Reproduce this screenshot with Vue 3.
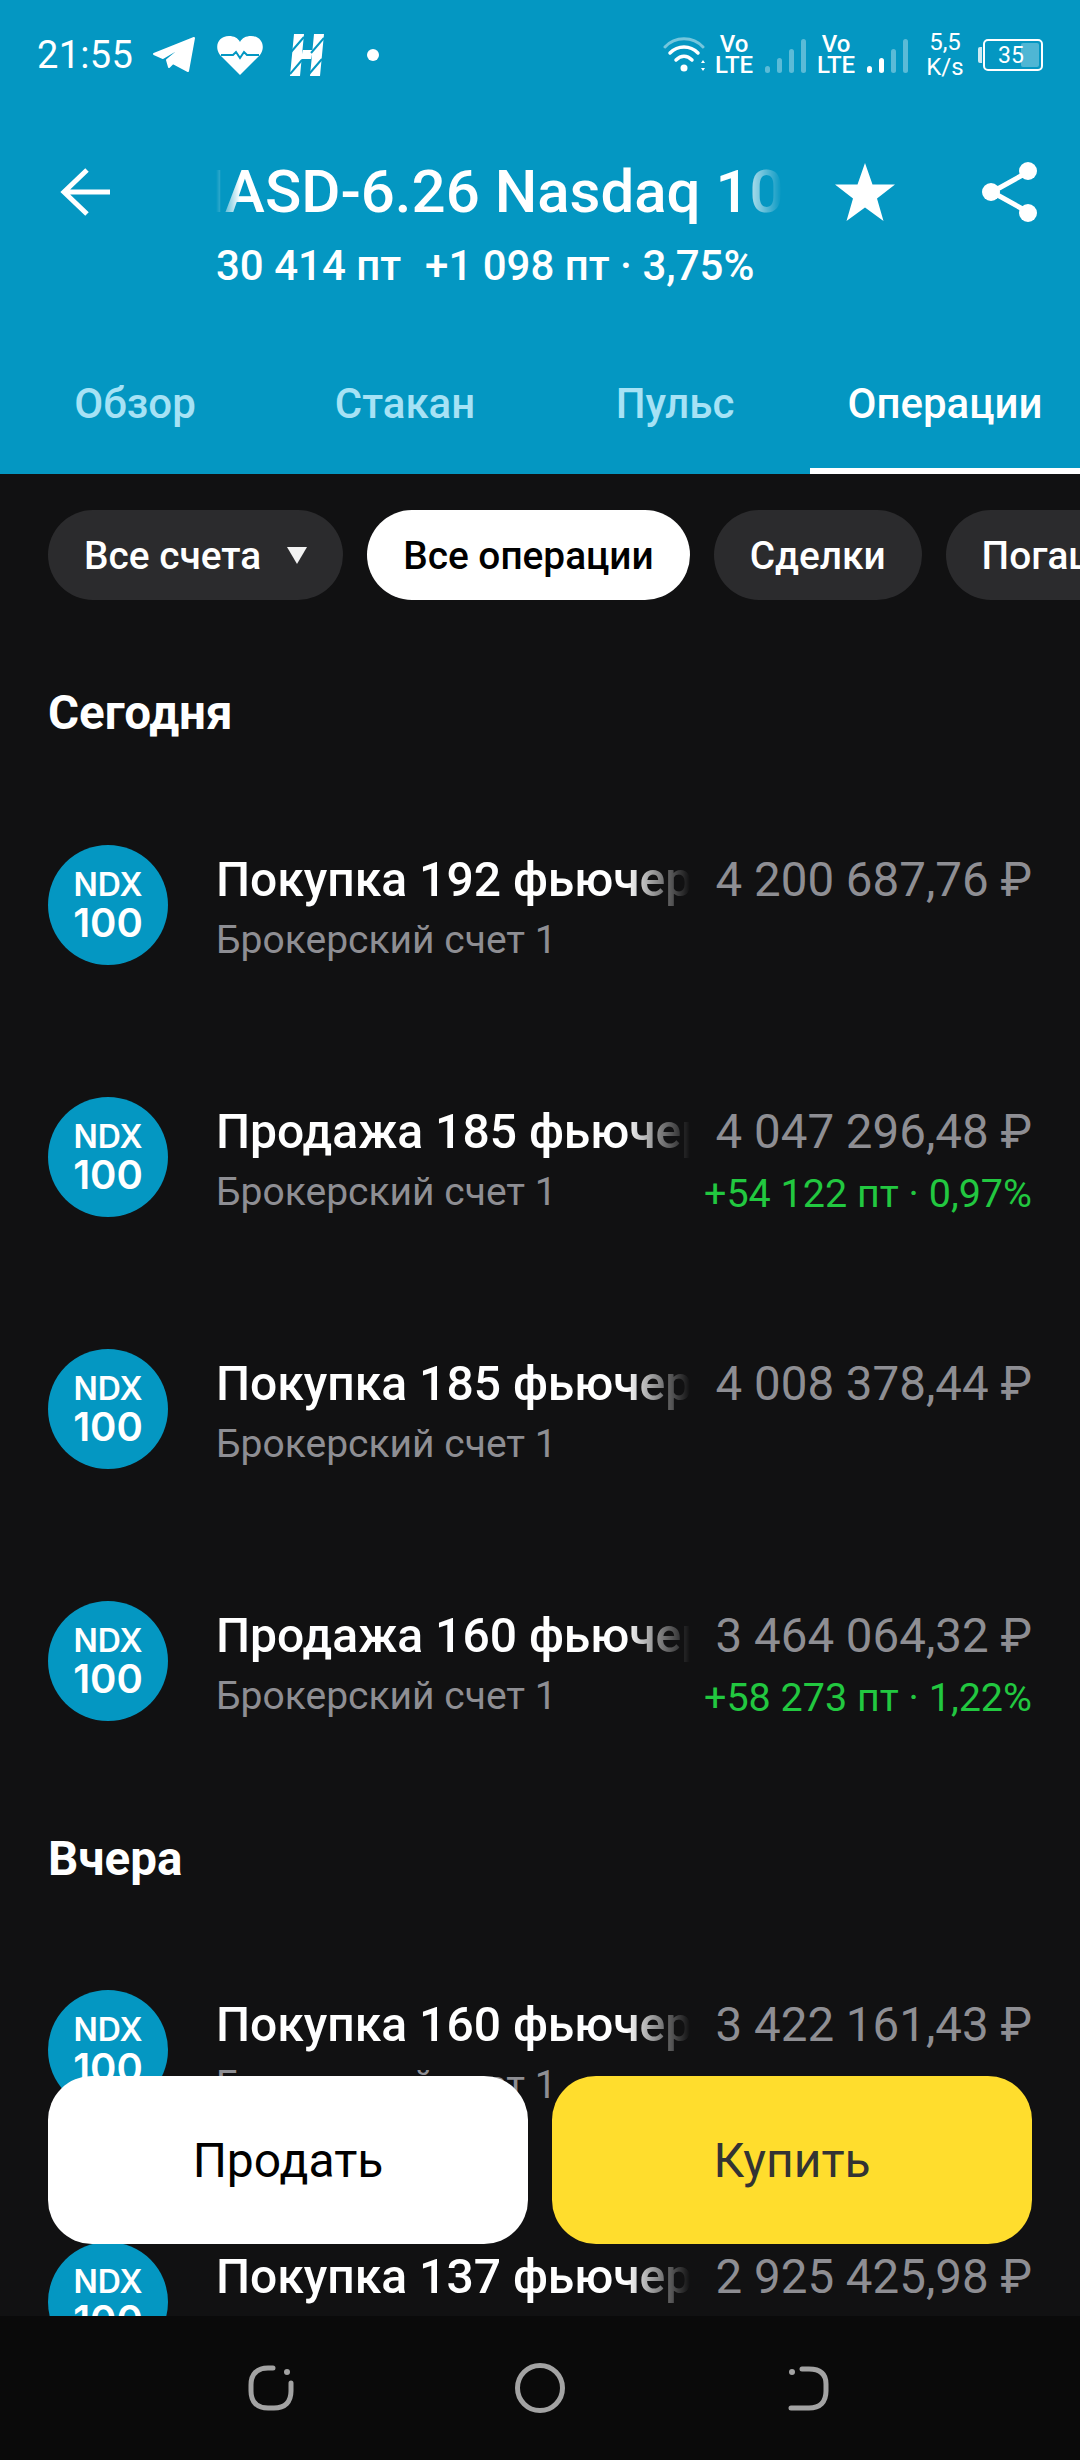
<template>
  <div class="screen">
    <header class="top">
      <div class="status">
        <div class="status-left">
          <span class="time">21:55</span>
          <svg class="ic-tg" width="44" height="38" viewBox="0 0 44 38">
            <path d="M2 18 42 2 36 35 21 27 17 31 15 24 33 9 11 22Z" fill="#fff" stroke="#fff" stroke-width="2" stroke-linejoin="round" />
          </svg>
          <svg class="ic-heart" width="46" height="40" viewBox="0 0 46 40">
            <path d="M23 40 3 20C-3 12 1 1 12 1c5 0 9 2 11 6 2-4 6-6 11-6 11 0 15 11 9 19Z" fill="#fff" />
            <path d="M4 20h12l3-3 4 6 4-6 3 3h12" fill="none" stroke="#0497c2" stroke-width="2" />
          </svg>
          <svg class="ic-h" width="34" height="42" viewBox="0 0 34 42">
            <path d="M4 0h10L10 42H0ZM24 0h10l-4 42H20ZM13 16h10l-2 9H11Z" fill="#fff" />
            <path d="M1 18 14 3M21 19 34 4M0 40 12 26M19 40 32 25" stroke="#0497c2" stroke-width="2" />
          </svg>
          <span class="dot"></span>
        </div>
        <div class="status-right">
          <svg width="44" height="38" viewBox="0 0 44 38" fill="none" stroke="#fff" stroke-linecap="round">
            <path d="M2 11C12 0 30 0 40 11" stroke-width="3" opacity=".45" />
            <path d="M7 17c8-8 20-8 28 0" stroke-width="3.5" />
            <path d="M13 24c5-5 11-5 16 0" stroke-width="3.5" />
            <circle cx="21" cy="32" r="3.5" fill="#fff" stroke="none" />
            <path d="M38 27l2-3 2 3zM38 32l2 3 2-3z" fill="#fff" stroke="none" />
          </svg>
          <div class="volte first"><span>Vo</span><span>LTE</span></div>
          <div class="signal">
            <i class="b1 dim"></i><i class="b2 dim"></i><i class="b3 dim"></i><i class="b4 dim"></i>
          </div>
          <div class="volte"><span>Vo</span><span>LTE</span></div>
          <div class="signal">
            <i class="b1"></i><i class="b2"></i><i class="b3 dim"></i><i class="b4 dim"></i>
          </div>
          <div class="speed"><span>5,5</span><span>K/s</span></div>
          <div class="battery">
            <i class="nub"></i>
            <div class="cell"><i class="cell-fill"></i><span>35</span></div>
          </div>
        </div>
      </div>

      <div class="titlebar">
        <svg class="back" width="50" height="48" viewBox="0 0 50 48" fill="none" stroke="#fff" stroke-width="5">
          <path d="M27 2 4 24l23 22M4 24h46" />
        </svg>
        <div class="title-wrap">
          <div class="title-mask"><span class="title">NASD-6.26 Nasdaq 100</span></div>
          <div class="subtitle">30 414 пт<span class="subtitle-change">+1 098 пт · 3,75%</span></div>
        </div>
        <svg class="star" width="60" height="58" viewBox="0 0 60 58">
          <path d="M30 0l7.500 21.500H60L42 35.500 48.500 58 30 44.500 11.500 58 18 35.500 0 21.500h22.500Z" fill="#fff" />
        </svg>
        <svg class="share" width="56" height="60" viewBox="0 0 56 60">
          <path d="M46 10 10 30l36 20" fill="none" stroke="#fff" stroke-width="5" />
          <circle cx="46" cy="9" r="9" fill="#fff" />
          <circle cx="9" cy="30" r="9" fill="#fff" />
          <circle cx="46" cy="51" r="9" fill="#fff" />
        </svg>
      </div>

      <nav class="tabs">
        <div v-for="tab in tabs" :key="tab" class="tab" :class="{ active: tab === 'Операции' }">{{ tab }}</div>
      </nav>
    </header>

    <main class="content">
      <div class="chips">
        <div class="chip chip-accounts">Все счета <i class="caret"></i></div>
        <div class="chip selected">Все операции</div>
        <div class="chip">Сделки</div>
        <div class="chip">Погашения</div>
      </div>

      <section v-for="group in groups" :key="group.title">
        <h2 class="group-title">{{ group.title }}</h2>
        <div v-for="op in group.items" :key="op.name" class="row">
          <div class="logo">
            <span class="logo-top">NDX</span>
            <span class="logo-bottom">100</span>
          </div>
          <div class="row-main">
            <div class="row-name">{{ op.name }}</div>
            <div class="row-sub">Брокерский счет 1</div>
          </div>
          <div class="row-side">
            <div class="row-sum">{{ op.sum }}</div>
            <div v-if="op.profit" class="row-profit">{{ op.profit }}</div>
          </div>
        </div>
      </section>

      <div class="actions">
        <button class="action sell">Продать</button>
        <button class="action buy">Купить</button>
      </div>
    </main>

    <footer class="navbar">
      <svg width="46" height="46" viewBox="0 0 46 46" fill="none" stroke="#a3a3a3" stroke-width="5" stroke-linecap="round">
        <path d="M25 3H20C9 3 3 9 3 20v6c0 11 6 17 17 17h6c11 0 17-6 17-17V18" />
        <circle cx="39" cy="7" r="3" fill="#a3a3a3" stroke="none" />
      </svg>
      <svg width="50" height="50" viewBox="0 0 50 50" fill="none" stroke="#a3a3a3" stroke-width="5">
        <circle cx="25" cy="25" r="22.500" />
      </svg>
      <svg width="44" height="46" viewBox="0 0 44 46" fill="none" stroke="#a3a3a3" stroke-width="5" stroke-linecap="round">
        <path d="M16 4h7c11 0 17 5 17 15v7c0 11-6 17-17 17H5" />
        <circle cx="6" cy="7" r="3" fill="#a3a3a3" stroke="none" />
      </svg>
    </footer>
  </div>
</template>

<script setup>
const tabs = ['Обзор', 'Стакан', 'Пульс', 'Операции']

const groups = [
  {
    title: 'Сегодня',
    items: [
      { name: 'Покупка 192 фьючерсов', sum: '4 200 687,76 ₽' },
      { name: 'Продажа 185 фьючерсов', sum: '4 047 296,48 ₽', profit: '+54 122 пт · 0,97%' },
      { name: 'Покупка 185 фьючерсов', sum: '4 008 378,44 ₽' },
      { name: 'Продажа 160 фьючерсов', sum: '3 464 064,32 ₽', profit: '+58 273 пт · 1,22%' }
    ]
  },
  {
    title: 'Вчера',
    items: [
      { name: 'Покупка 160 фьючерсов', sum: '3 422 161,43 ₽' },
      { name: 'Покупка 137 фьючерсов', sum: '2 925 425,98 ₽' }
    ]
  }
]
</script>

<style>
html,
body {
  margin: 0;
  background: #111112;
}
</style>

<style scoped>
.screen {
  width: 1080px;
  height: 2460px;
  display: flex;
  flex-direction: column;
  overflow: hidden;
  background: #111112;
  color: #fff;
  font-family: Roboto, "Noto Sans", sans-serif;
}

.top {
  flex: none;
  height: 474px;
  display: flex;
  flex-direction: column;
  background: #0497c2;
}

.status {
  height: 110px;
  padding: 0 37px;
  display: flex;
  align-items: center;
  justify-content: space-between;
}

.status-left,
.status-right {
  display: flex;
  align-items: center;
}

.time {
  font-size: 38px;
  line-height: 44px;
  letter-spacing: 0.3px;
}

.ic-tg {
  margin-left: 19px;
}

.ic-heart {
  margin-left: 21px;
}

.ic-h {
  margin-left: 27px;
}

.dot {
  width: 12px;
  height: 12px;
  margin-left: 43px;
  border-radius: 50%;
  background: #fff;
}

.volte {
  display: flex;
  flex-direction: column;
  align-items: center;
  width: 38px;
  margin-left: 11px;
  font-size: 24px;
  font-weight: 500;
  line-height: 21px;
}

.volte.first {
  margin-left: 8px;
}

.signal {
  display: flex;
  align-items: flex-end;
  gap: 7px;
  height: 34px;
  margin-left: 12px;
  margin-top: 2px;
}

.signal i {
  display: block;
  width: 5px;
  border-radius: 3px;
  background: #fff;
}

.signal i.dim {
  opacity: 0.35;
}

.signal .b1 {
  height: 7px;
}

.signal .b2 {
  height: 15px;
}

.signal .b3 {
  height: 24px;
}

.signal .b4 {
  height: 34px;
}

.speed {
  display: flex;
  flex-direction: column;
  align-items: center;
  width: 40px;
  margin-left: 17px;
  font-size: 24px;
  line-height: 25px;
}

.battery {
  display: flex;
  align-items: center;
  margin-left: 13px;
}

.nub {
  width: 4px;
  height: 16px;
  margin-right: 1px;
  border-radius: 2px 0 0 2px;
  background: #fff;
  opacity: 0.8;
}

.cell {
  position: relative;
  width: 60px;
  height: 32px;
  box-sizing: border-box;
  display: flex;
  align-items: center;
  padding-left: 13px;
  border: 2px solid #fff;
  border-radius: 5px;
  font-size: 23px;
}

.cell span {
  position: relative;
}

.cell-fill {
  position: absolute;
  top: 2px;
  bottom: 2px;
  right: 2px;
  width: 18px;
  border-radius: 2px;
  background: #fff;
  opacity: 0.3;
}

.titlebar {
  height: 132px;
  margin-top: 48px;
  display: flex;
  align-items: flex-start;
}

.back {
  flex: none;
  margin: 10px 0 0 60px;
}

.title-wrap {
  flex: none;
  width: 570px;
  margin-left: 106px;
}

.title-mask {
  overflow: hidden;
  height: 68px;
  white-space: nowrap;
  mask-image: linear-gradient(to right, transparent, #000 24px, #000 520px, transparent 566px);
  -webkit-mask-image: linear-gradient(to right, transparent, #000 24px, #000 520px, transparent 566px);
}

.title {
  display: block;
  margin-left: -34px;
  font-size: 60px;
  font-weight: 500;
  line-height: 68px;
}

.subtitle {
  margin-top: 16px;
  font-size: 42px;
  font-weight: 500;
  line-height: 48px;
  white-space: nowrap;
}

.subtitle-change {
  margin-left: 24px;
}

.star {
  flex: none;
  margin: 5px 0 0 49px;
}

.share {
  flex: none;
  margin: 4px 0 0 87px;
}

.tabs {
  margin-top: auto;
  height: 130px;
  display: grid;
  grid-template-columns: repeat(4, 270px);
}

.tab {
  display: flex;
  justify-content: center;
  padding-top: 36px;
  font-size: 42px;
  font-weight: 500;
  line-height: 48px;
  color: #a6e2f5;
}

.tab.active {
  color: #fff;
  border-bottom: 6px solid #fff;
}

.content {
  position: relative;
  flex: 1;
  min-height: 0;
  overflow: hidden;
}

.chips {
  display: flex;
  gap: 24px;
  padding: 36px 0 0 48px;
  white-space: nowrap;
}

.chip {
  flex: none;
  height: 90px;
  display: flex;
  align-items: center;
  padding: 0 36px;
  border-radius: 45px;
  background: #2b2b2d;
  font-size: 38.800px;
  font-weight: 500;
}

.chip.selected {
  background: #fff;
  color: #000;
}

.caret {
  width: 0;
  height: 0;
  margin-left: 26px;
  border-left: 10px solid transparent;
  border-right: 10px solid transparent;
  border-top: 17px solid #f2f2f2;
}

.group-title {
  height: 137px;
  box-sizing: border-box;
  margin: 0;
  padding: 48px 0 0 48px;
  font-size: 47.500px;
  font-weight: 700;
  line-height: 48px;
}

.chips + section .group-title {
  height: 179px;
  padding-top: 89px;
}

.row {
  height: 252px;
  display: flex;
  align-items: center;
  padding: 0 48px;
}

.logo {
  flex: none;
  width: 120px;
  height: 120px;
  display: flex;
  flex-direction: column;
  align-items: center;
  justify-content: center;
  border-radius: 50%;
  background: #0497c2;
  font-family: Inter, Roboto, sans-serif;
}

.logo-top {
  font-size: 32px;
  font-weight: 600;
  line-height: 34px;
}

.logo-bottom {
  margin-top: 1px;
  font-size: 40px;
  font-weight: 600;
  line-height: 40px;
}

.row-main {
  flex: none;
  width: 474px;
  height: 122px;
  margin-left: 48px;
  margin-top: 10px;
  overflow: hidden;
  white-space: nowrap;
}

.row-name {
  font-size: 48px;
  font-weight: 500;
  line-height: 61px;
  mask-image: linear-gradient(to right, #000 410px, transparent 474px);
  -webkit-mask-image: linear-gradient(to right, #000 410px, transparent 474px);
}

.row-sub {
  font-size: 39px;
  line-height: 61px;
  color: #8e8e93;
}

.row-side {
  flex: 1;
  min-width: 0;
  height: 122px;
  margin-top: 10px;
  text-align: right;
  white-space: nowrap;
}

.row-sum {
  font-size: 47.500px;
  line-height: 63px;
  color: #8e8e93;
}

.row-profit {
  font-size: 39.500px;
  line-height: 59px;
  color: #22c840;
}

.actions {
  position: absolute;
  left: 48px;
  right: 48px;
  top: 1602px;
  display: grid;
  grid-template-columns: 1fr 1fr;
  gap: 24px;
}

.action {
  height: 168px;
  border: 0;
  border-radius: 44px;
  font-family: inherit;
  font-size: 48px;
}

.sell {
  background: #fff;
  color: #000;
}

.buy {
  background: #ffdd2d;
  color: #333;
}

.navbar {
  flex: none;
  height: 144px;
  display: flex;
  align-items: center;
  background: #0a0a0a;
  padding-left: 248px;
  gap: 221px;
}
</style>
